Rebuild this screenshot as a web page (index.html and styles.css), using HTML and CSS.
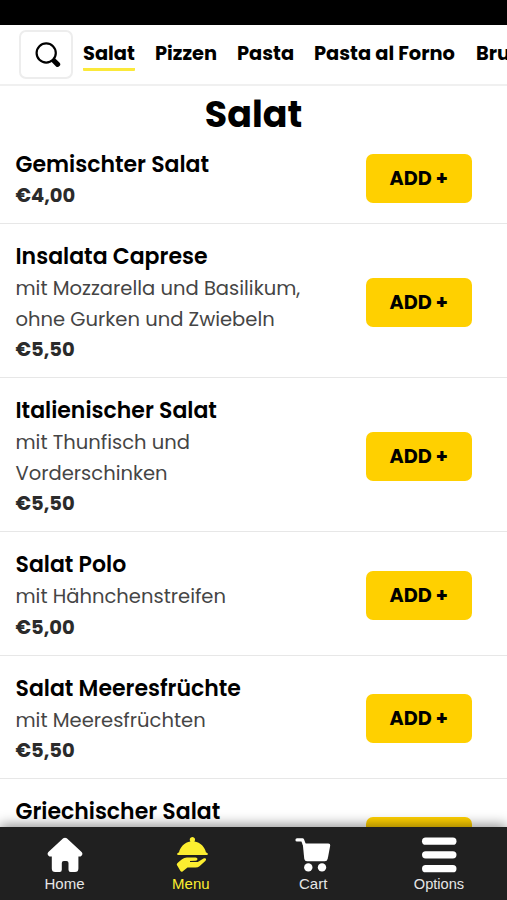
FILE: index.html
```html
<!DOCTYPE html>
<html lang="de">
<head>
<meta charset="utf-8">
<meta name="viewport" content="width=device-width, initial-scale=1">
<title>Salat</title>
<link rel="stylesheet" href="styles.css">
</head>
<body>
<div class="app">
  <div class="status"></div>
  <header class="top">
    <button class="search" aria-label="Suche">
      <svg width="26" height="26" viewBox="0 0 26 26"><circle cx="11.2" cy="11" r="9.6" fill="none" stroke="#000" stroke-width="2.2"/><path d="M18 17.6l1.2 1.2" stroke="#000" stroke-width="2.4"/><path d="M19.2 19l3.4 3.3" stroke="#000" stroke-width="5.2" stroke-linecap="round"/></svg>
    </button>
    <nav class="tabs">
      <a class="tab salat active">Salat</a>
      <a class="tab pizzen">Pizzen</a>
      <a class="tab pasta">Pasta</a>
      <a class="tab forno">Pasta al Forno</a>
      <a class="tab brus">Brus</a>
    </nav>
  </header>
  <main class="menu">
    <h1>Salat</h1>
    <section class="item first"><div class="info"><h2>Gemischter Salat</h2><b class="price">€4,00</b></div><button class="add">ADD +</button></section>
    <section class="item"><div class="info"><h2>Insalata Caprese</h2><p>mit Mozzarella und Basilikum,<br>ohne Gurken und Zwiebeln</p><b class="price">€5,50</b></div><button class="add">ADD +</button></section>
    <section class="item"><div class="info"><h2>Italienischer Salat</h2><p>mit Thunfisch und<br>Vorderschinken</p><b class="price">€5,50</b></div><button class="add">ADD +</button></section>
    <section class="item"><div class="info"><h2>Salat Polo</h2><p>mit Hähnchenstreifen</p><b class="price">€5,00</b></div><button class="add">ADD +</button></section>
    <section class="item"><div class="info"><h2>Salat Meeresfrüchte</h2><p>mit Meeresfrüchten</p><b class="price">€5,50</b></div><button class="add">ADD +</button></section>
    <section class="item last"><div class="info"><h2>Griechischer Salat</h2></div><button class="add">ADD +</button></section>
  </main>
  <footer class="bar">
    <a class="link"><svg width="36" height="36" viewBox="0 0 36 36" fill="currentColor"><path d="M16.2 1.3Q18 0 19.8 1.3L34.6 15Q36.3 17 34.5 18.7Q33.5 19.8 31.4 19.5V31.5Q31.4 35 28 35H23.6Q21.5 35 21.5 32.8V26Q21.5 24 19.5 24H16.8Q14.8 24 14.8 26V32.8Q14.8 35 12.7 35H8.2Q4.8 35 4.8 31.5V19.5Q2.5 19.8 1.5 18.7Q-.3 17 1.4 15Z"/></svg><span>Home</span></a>
    <a class="link on"><svg width="36" height="36" viewBox="0 0 36 36" fill="currentColor"><path d="M18.4 0a2.7 2.7 0 0 1 2 4.5C26.5 5.5 31 10 32 15.6H5C6 10 10.5 5.5 16.4 4.5A2.7 2.7 0 0 1 18.4 0ZM4.5 15.5H32.5L33.8 16.5Q34 18 33 18H4Q3 18 3.2 16.5Z"/><path d="M3.3 26.2C7 23 9 20.7 13 20.5H21.5C24 20.5 24.2 23.5 21.6 23.8L16 24.1V25H23.8L29.5 21.6C31.8 20.5 33 22.3 31.3 24L25.5 29.2Q23.9 30.5 21.5 30.5H13.5L8.2 34.8Q6.9 35 6.3 33.8L2.9 28.1Q2.5 27 3.3 26.2Z"/></svg><span>Menu</span></a>
    <a class="link cart"><svg width="36" height="36" viewBox="0 0 36 36" fill="currentColor"><path d="M2 2.9H7.5L9.3 7.5" fill="none" stroke="currentColor" stroke-width="3.2" stroke-linecap="round" stroke-linejoin="round"/><path d="M7.7 6.5H33.3Q35.5 6.5 35.2 8.7L32.7 21.8Q32.2 24.3 29.7 24.3H12Q9.7 24.3 9.3 22Z"/><circle cx="13.3" cy="30.4" r="4.2"/><circle cx="27" cy="30.4" r="4.2"/></svg><span>Cart</span></a>
    <a class="link options"><svg width="36" height="36" viewBox="0 0 36 36" fill="currentColor"><rect x="1" y=".5" width="34.5" height="7.3" rx="3.65"/><rect x="1" y="14.2" width="34.5" height="7.3" rx="3.65"/><rect x="1" y="28" width="34.5" height="7.3" rx="3.65"/></svg><span>Options</span></a>
  </footer>
</div>
</body>
</html>
```
FILE: styles.css
```css
* { box-sizing: border-box; }
body { margin: 0; background: #fff; color: #000; font-family: Poppins, Inter, "Liberation Sans", sans-serif; }
h1, h2, p { margin: 0; }
button { font-family: inherit; color: #000; padding: 0; }
.app { height: 900px; overflow: hidden; display: flex; flex-direction: column; }
.status { flex: 0 0 25px; background: #000; }
.top { flex: 0 0 61px; display: flex; align-items: flex-start; padding: 5px 0 0 19px; border-bottom: 2px solid #f0f0f0; overflow: hidden; }
.search { flex: 0 0 54px; height: 49px; display: flex; align-items: center; justify-content: center; padding: 0 0 0 3px; background: #fff; border: 2px solid #ededed; border-radius: 7px; }
.tabs { display: flex; gap: 20px; padding: 6px 0 0 10px; }
.tab { flex: none; height: 35px; font-size: 19.4px; font-weight: 700; line-height: 36px; white-space: nowrap; }
.active { border-bottom: 3px solid #fbe93a; border-radius: 1px; }
.salat { width: 52px; }
.pizzen { width: 62px; }
.pasta { width: 57px; }
.forno { width: 142px; }
.menu { flex: 1; min-height: 0; overflow: hidden; }
h1 { height: 46px; padding-top: 5px; font-size: 36.4px; font-weight: 700; line-height: 48px; text-align: center; }
.item { display: flex; align-items: center; justify-content: space-between; height: 123.5px; padding: 16px 35.5px 12px 15.5px; border-bottom: 1.5px solid #e7e7e7; }
.item:has(br) { height: 154px; }
.item.first { height: 92px; padding-top: 15px; }
.item.first .add { margin-bottom: 1px; }
.item.last { align-items: flex-start; border: 0; }
h2 { padding-top: 1px; font-size: 22px; font-weight: 600; line-height: 33px; white-space: nowrap; }
p { color: #454545; font-size: 19.55px; line-height: 30.8px; white-space: nowrap; }
.price { display: block; color: #2b2b2b; font-size: 19.5px; font-weight: 700; line-height: 30.8px; }
.item p + .price { padding-top: .5px; }
.add { flex: none; width: 105.5px; height: 49px; border: 0; border-radius: 7px; background: #ffd000; font-size: 19.3px; font-weight: 700; }
.last .add { margin-top: 22px; }
.last h2 { padding-top: 0; }
.bar { position: relative; flex: 0 0 73.5px; display: flex; justify-content: space-between; padding: 10px 28px 0 24.5px; background: #202020; box-shadow: 0 -2px 12px rgba(0, 0, 0, .45); }
.link { width: 80px; display: flex; flex-direction: column; align-items: center; color: #fff; font: 15px/20px "Liberation Sans", Arial, sans-serif; }
.link span { margin-top: 1.5px; color: #e6e6e6; }
.link.on { width: 83px; color: #fcee30; }
.link.on span { margin-left: -2px; color: #fcee30; }
.cart { margin-left: -6px; }
.options span { font-size: 14.6px; }
```
